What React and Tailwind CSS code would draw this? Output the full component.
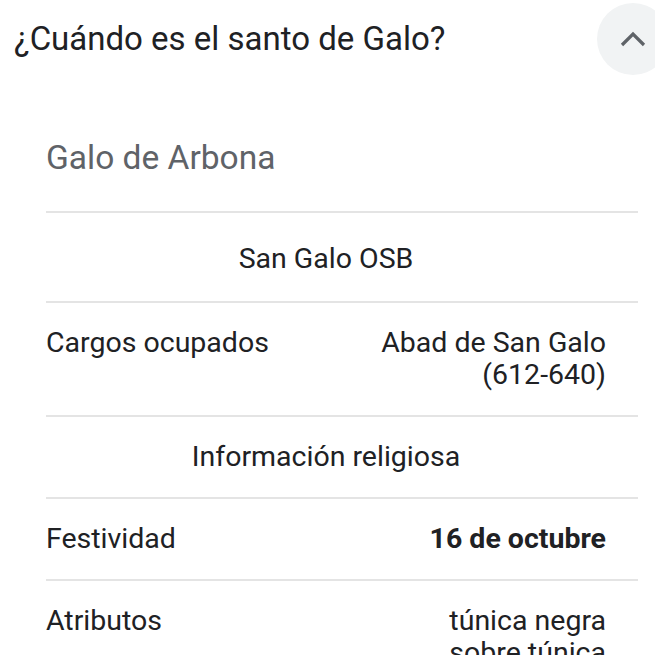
import React from "react";

function Row({ label, value, bold }) {
  return (
    <div className="flex justify-between border-b-2 border-[#e4e4e4] py-[24px] pr-[32px] leading-[32px]">
      <div>{label}</div>
      <div className={"text-right max-w-[260px] " + (bold ? "font-bold" : "")}>{value}</div>
    </div>
  );
}

export default function App() {
  return (
    <div
      className="w-[655px] h-[655px] overflow-hidden bg-white text-[#202124]"
      style={{ fontFamily: "Roboto, 'Liberation Sans', sans-serif" }}
    >
      <div className="flex items-center justify-between h-[78px] pl-[14px]">
        <div className="text-[33px] leading-[40px] text-[#202124]">¿Cuándo es el santo de Galo?</div>
        <div className="shrink-0 w-[72px] h-[72px] rounded-full bg-[#f1f3f4] mr-[-14px] flex items-center justify-center">
          <svg width="26" height="16" viewBox="0 0 26 16">
            <polyline points="2,14 13,3 24,14" fill="none" stroke="#5f6368" strokeWidth="3.2" />
          </svg>
        </div>
      </div>
      <div className="pl-[46px] pr-[17px] text-[28.5px]">
        <div className="pt-[60px] pb-[33px] leading-[40px] text-[33.5px] text-[#5f6368] border-b-2 border-[#e4e4e4]">
          Galo de Arbona
        </div>
        <div className="pt-[30px] pb-[26px] pr-[32px] leading-[32px] text-center border-b-2 border-[#e4e4e4] text-[#202124]">
          San Galo OSB
        </div>
        <Row label="Cargos ocupados" value={<>Abad de San Galo<br />(612-640)</>} />
        <div className="py-[24px] pr-[32px] leading-[32px] text-center border-b-2 border-[#e4e4e4]">
          Información religiosa
        </div>
        <Row label="Festividad" value="16 de octubre" bold />
        <Row label="Atributos" value={<>túnica negra<br />sobre túnica</>} />
      </div>
    </div>
  );
}
